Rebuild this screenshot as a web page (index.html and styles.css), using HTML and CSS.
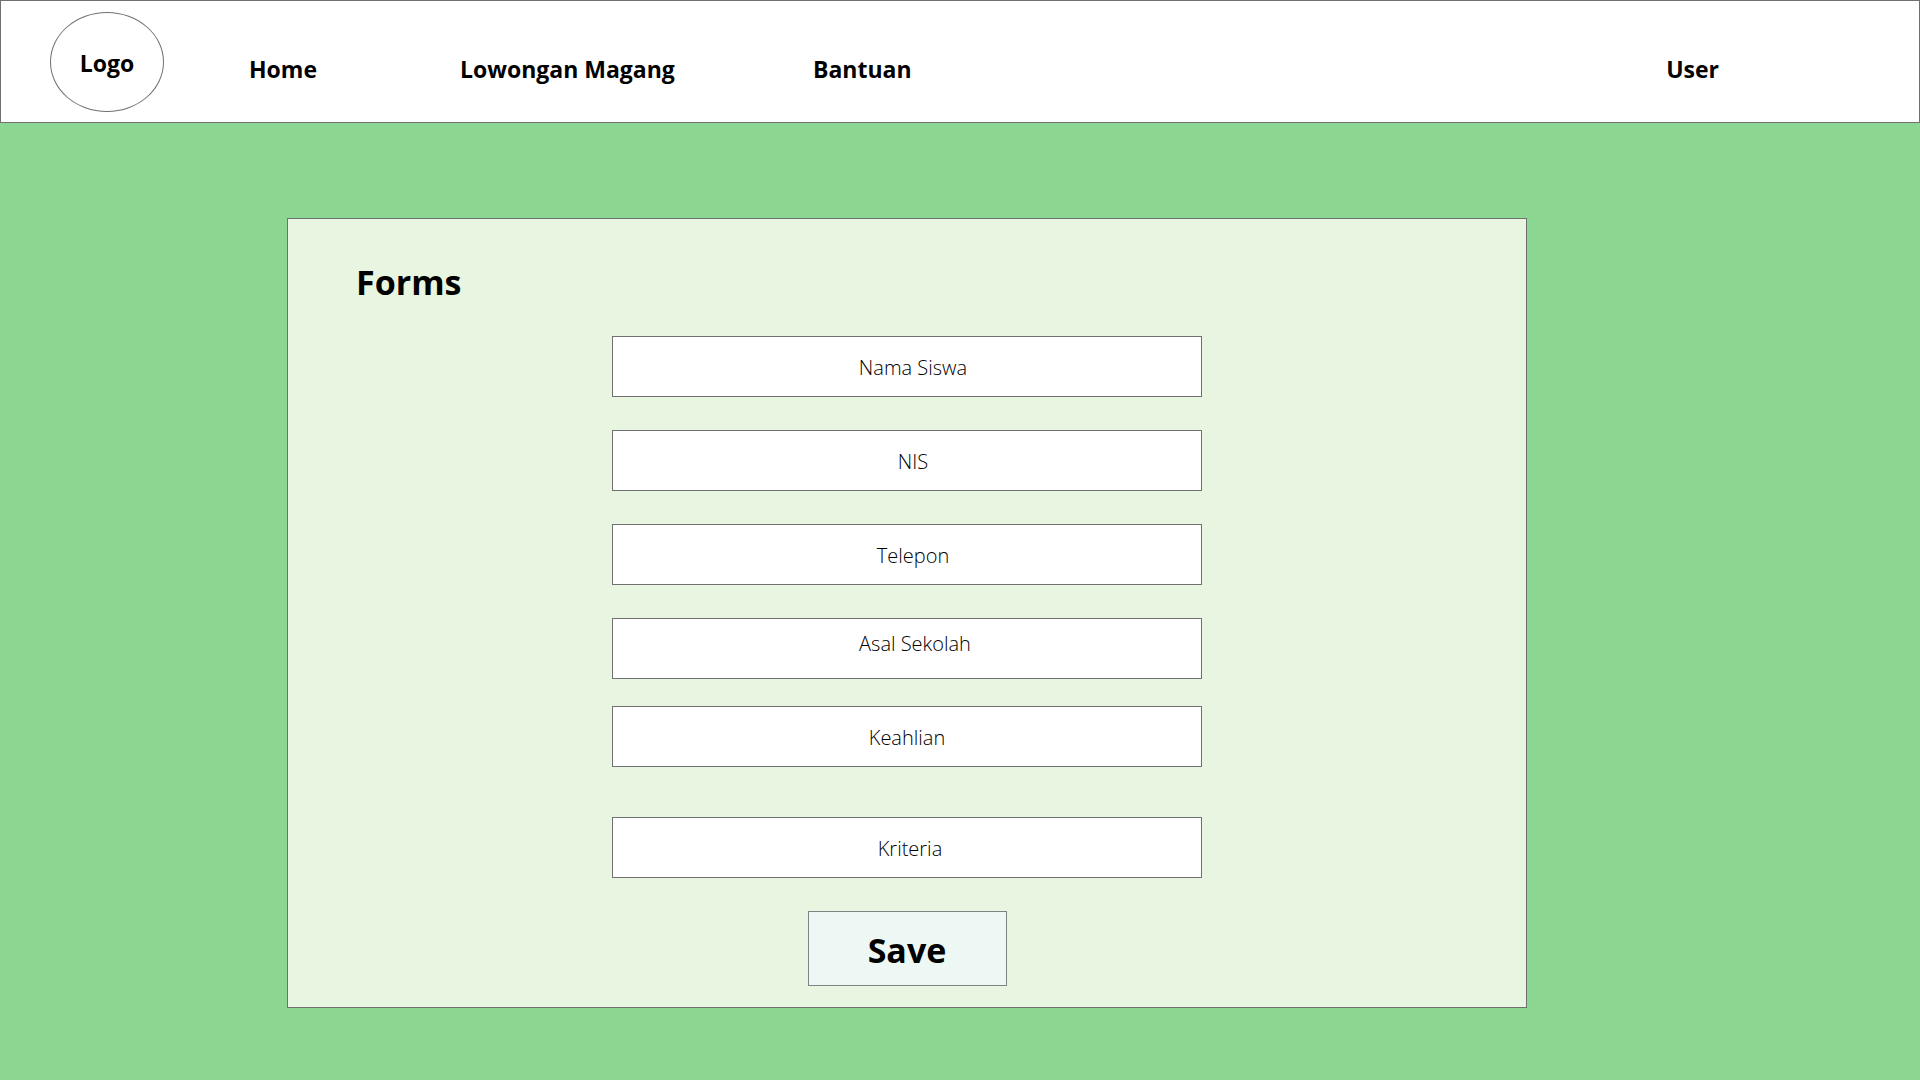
FILE: index.html
```html
<!DOCTYPE html>
<html lang="id">
<head>
  <meta charset="utf-8">
  <meta name="viewport" content="width=device-width, initial-scale=1">
  <title>Forms</title>
  <link rel="stylesheet" href="styles.css">
</head>
<body>
  <header class="topbar">
    <a class="logo" href="#">Logo</a>
    <nav class="nav">
      <a href="#">Home</a>
      <a href="#">Lowongan Magang</a>
      <a href="#">Bantuan</a>
      <a class="nav-user" href="#">User</a>
    </nav>
  </header>
  <main class="page">
    <form class="panel">
      <h1 class="title">Forms</h1>
      <div class="fields">
        <input class="field" type="text" placeholder="Nama Siswa" aria-label="Nama Siswa">
        <input class="field" type="text" placeholder="NIS" aria-label="NIS">
        <input class="field" type="tel" placeholder="Telepon" aria-label="Telepon">
        <input class="field field-school" type="text" placeholder="Asal Sekolah" aria-label="Asal Sekolah">
        <input class="field field-skill" type="text" placeholder="Keahlian" aria-label="Keahlian">
        <input class="field field-criteria" type="text" placeholder="Kriteria" aria-label="Kriteria">
        <button class="save" type="button">Save</button>
      </div>
    </form>
  </main>
</body>
</html>
```
FILE: styles.css
```css
* {
  box-sizing: border-box;
}

body {
  margin: 0;
  min-height: 100vh;
  background: #8bd690;
  color: #000;
  font-family: "Segoe UI", "Open Sans", "Noto Sans", sans-serif;
}

a {
  color: inherit;
  text-decoration: none;
}

.topbar {
  display: flex;
  align-items: center;
  padding: 11px 200px 10px 49px;
  background: #fff;
  border: 1px solid #707070;
  font-size: 23px;
  font-weight: 700;
  line-height: 32px;
}

.logo {
  display: flex;
  align-items: center;
  justify-content: center;
  flex: none;
  width: 114px;
  height: 100px;
  padding-top: 2px;
  border: 1px solid #707070;
  border-radius: 50%;
}

.nav {
  display: grid;
  flex: 1;
  grid-template-columns: 211px 353px auto 1fr;
  padding-top: 14px;
  margin-left: 85px;
}

.nav-user {
  justify-self: end;
}

.page {
  padding: 95px 393px 72px 287px;
}

.panel {
  padding: 39px 20px 21px;
  background: #e8f5e0;
  border: 1px solid #707070;
}

.title {
  margin: 0 0 30px;
  padding-left: 48px;
  font-size: 34px;
  font-weight: 700;
  line-height: 48px;
}

.fields {
  display: flex;
  flex-direction: column;
  align-items: center;
  gap: 33px;
}

.field {
  width: 590px;
  max-width: 100%;
  height: 61px;
  padding: 2px 0 0 12px;
  border: 1px solid #707070;
  border-radius: 0;
  background: #fff;
  color: #000;
  font-family: inherit;
  font-size: 20px;
  font-weight: 300;
  text-align: center;
}

.field::placeholder {
  color: #000;
  opacity: 1;
}

.field-school {
  padding: 0 0 10px 16px;
  margin-bottom: -6px;
}

.field-skill {
  padding-left: 0;
  margin-bottom: 17px;
}

.field-criteria {
  padding-left: 6px;
}

.save {
  width: 199px;
  height: 75px;
  padding: 2px 0 0;
  border: 1px solid #7b8583;
  background: #edf7f4;
  color: #000;
  font-family: inherit;
  font-size: 34px;
  font-weight: 700;
  line-height: 48px;
}
```
